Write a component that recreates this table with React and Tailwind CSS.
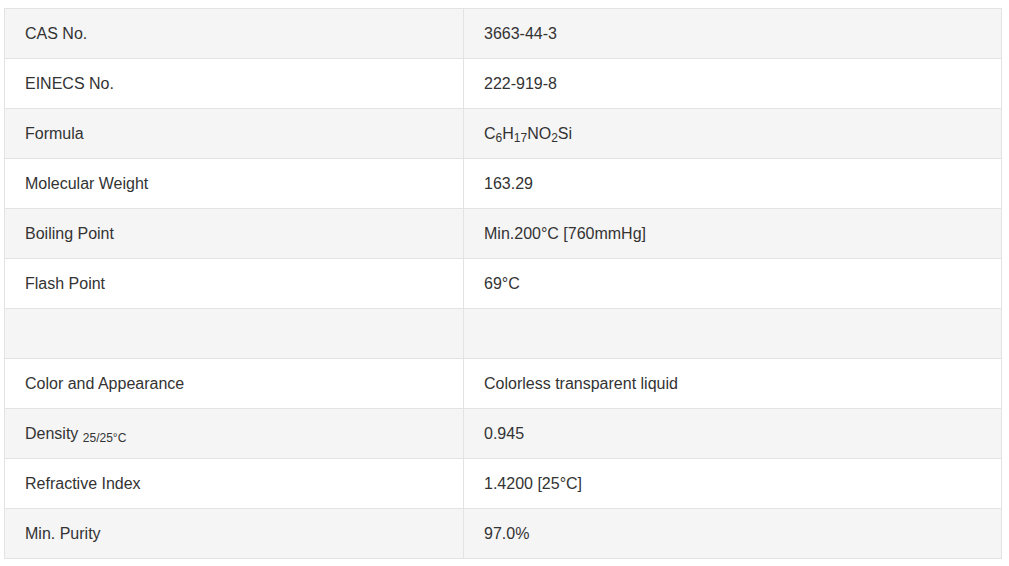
export default function App() {
  const sub = "text-[12px] leading-none align-[-3px]";
  const rows = [
    ["CAS No.", "3663-44-3"],
    ["EINECS No.", "222-919-8"],
    [
      "Formula",
      <>
        C<span className={sub}>6</span>H<span className={sub}>17</span>NO
        <span className={sub}>2</span>Si
      </>,
    ],
    ["Molecular Weight", "163.29"],
    ["Boiling Point", "Min.200°C [760mmHg]"],
    ["Flash Point", "69°C"],
    ["", ""],
    ["Color and Appearance", "Colorless transparent liquid"],
    [
      <>
        Density <span className={sub}>25/25°C</span>
      </>,
      "0.945",
    ],
    ["Refractive Index", "1.4200 [25°C]"],
    ["Min. Purity", "97.0%"],
  ];

  return (
    <div className="w-[1009px] h-[566px] bg-white pl-[4px] pt-[8px] font-['Liberation_Sans',Arial,sans-serif] text-[16px] text-[#333]">
      <table className="w-[998px] border-collapse">
        <tbody>
          {rows.map((r, i) => (
            <tr key={i} className={i % 2 === 0 ? "bg-[#f5f5f5]" : "bg-white"}>
              <td className="w-[459px] h-[50px] border border-[#e3e3e3] px-[20px] align-middle">
                {r[0]}
              </td>
              <td className="h-[50px] border border-[#e3e3e3] px-[20px] align-middle">
                {r[1]}
              </td>
            </tr>
          ))}
        </tbody>
      </table>
    </div>
  );
}
